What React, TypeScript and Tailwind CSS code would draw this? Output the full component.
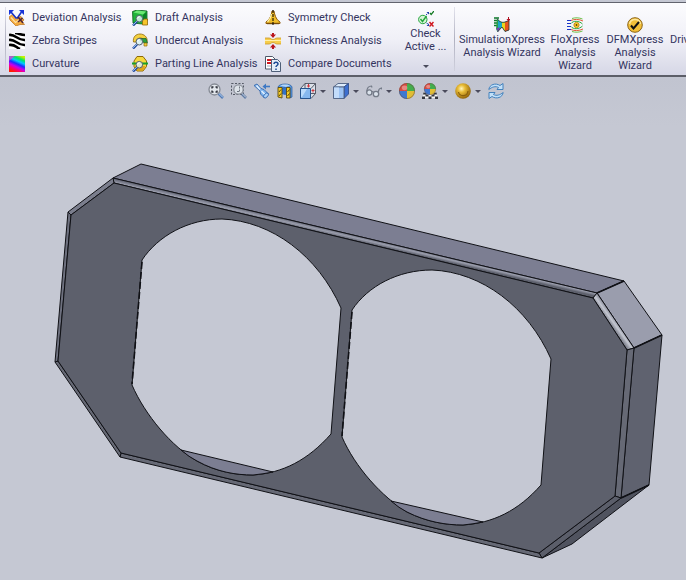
import React from 'react';
import type { ReactNode } from 'react';

function Icon({ children }: { children: ReactNode }) {
    return (
        <svg viewBox="0 0 16 16" className="w-4 h-4 shrink-0" aria-hidden="true">
            {children}
        </svg>
    );
}

function Caret() {
    return (
        <svg viewBox="0 0 6 3" className="w-[6px] h-[3px] shrink-0" aria-hidden="true">
            <path d="M0 0h6L3 3z" fill="#4a4b5c" />
        </svg>
    );
}

// Lupa pequeña que comparten varios iconos de análisis
function Lens() {
    return (
        <g>
            <path d="M5 11.5L1 15.5" stroke="#234a9c" strokeWidth="2.4" />
            <path d="M5 11L1.2 14.8" stroke="#8fc0f5" strokeWidth="1" />
            <circle cx="7.3" cy="8.7" r="3.3" fill="#d9f1ee" fillOpacity="0.85" stroke="#52606e" />
            <path d="M5.6 8.4a2 2 0 0 1 2-1.7" stroke="#fff" fill="none" />
        </g>
    );
}

const DeviationIcon = () => (
    <Icon>
        <path d="M0 7l3.5-2.5L7 8l5-1.5 3 3.5-2 1.5 2.5 3H11L7 16 1 10z" fill="#f3a93c" stroke="#b8701c" strokeWidth="0.7" />
        <path d="M2 7.5l4.5 5 3.5-2.5" stroke="#ffe0a0" strokeWidth="1.3" fill="none" />
        <path d="M2 2l5.5 6.5M12.5 2L8 8.5" stroke="#1733c8" strokeWidth="1.6" />
        <path d="M0 0h5L0 5zM15 0h-5l5 5z" fill="#1733d8" />
        <path d="M9 7l5 6M13.5 8L9 12" stroke="#4d2435" strokeWidth="1.6" />
    </Icon>
);

const ZebraIcon = () => (
    <Icon>
        <path d="M0 0h16v16H0z" fill="#fff" />
        <path d="M0 2c7-1 8 5.500 16 5M6 0c4 0 5 2 10 2M0 7c7-1 8 5.500 16 5M0 12c6-1 7 2.500 11 4" stroke="#000" strokeWidth="2.6" fill="none" />
    </Icon>
);

const CurvatureIcon = () => (
    <Icon>
        <defs>
            <linearGradient id="curvature" x1="0.75" y1="0" x2="0.3" y2="1">
                <stop offset="0" stopColor="#c8f000" />
                <stop offset="0.18" stopColor="#00e860" />
                <stop offset="0.34" stopColor="#00c8ff" />
                <stop offset="0.5" stopColor="#1b2cff" />
                <stop offset="0.66" stopColor="#c400f0" />
                <stop offset="0.82" stopColor="#ff0070" />
                <stop offset="1" stopColor="#ff1a00" />
            </linearGradient>
        </defs>
        <path d="M0 0h16v16H0z" fill="url(#curvature)" />
        <path d="M0 0h6L0 5z" fill="#f030d0" fillOpacity="0.7" />
    </Icon>
);

const DraftIcon = () => (
    <Icon>
        <path d="M.5 1.5L5 0l10 1v10l-5 3-9-1z" fill="#1fb43a" stroke="#0b5c1c" strokeWidth="0.8" />
        <path d="M5 .5l9 1-3 3-9.5-2z" fill="#6be874" />
        <path d="M11 5l3.5-3v9L11 13z" fill="#0e8228" />
        <path d="M10.5 10.5l2-1.5H15.5v6h-5z" fill="#f6c42c" stroke="#8f6a08" strokeWidth="0.8" />
        <Lens />
    </Icon>
);

const UndercutIcon = () => (
    <Icon>
        <path d="M1.5 9C.5 4 4 1 8 1s8 3 7 8h-3c0-3-2-4-4-4S4.5 7 4.5 9z" fill="#f4d040" stroke="#8f6a08" strokeWidth="0.8" />
        <path d="M8 5.5h6l1.5 4.5H12L10.5 8H8z" fill="#2da040" stroke="#155c22" strokeWidth="0.7" />
        <path d="M12 10h3v3h-3z" fill="#f4d040" stroke="#8f6a08" strokeWidth="0.7" />
        <Lens />
    </Icon>
);

const PartingIcon = () => (
    <Icon>
        <path d="M5 .5h6l3.5 4.5v5.5L11 15H5l-3-4.5V5z" fill="#f6d83c" stroke="#8f6a08" />
        <path d="M3 10h10.5L11 14.5H5z" fill="#e0a41c" />
        <path d="M0 7.5h4.5M10 7.5h6" stroke="#18a12c" strokeWidth="2" />
        <Lens />
    </Icon>
);

const SymmetryIcon = () => (
    <Icon>
        <path d="M7 1h2c1 6 3 9 6 11v1.5H1V12c3-2 5-5 6-11z" fill="#f0bd2a" stroke="#8f5a08" />
        <path d="M6.5 4C6 8 4.5 10 2.5 12" stroke="#fff3a8" strokeWidth="1.3" fill="none" />
        <path d="M2 13.5h12" stroke="#7b4d08" strokeWidth="1.4" />
        <path d="M8 0v16" stroke="#000" strokeDasharray="3 1" />
    </Icon>
);

const ThicknessIcon = () => (
    <Icon>
        <path d="M0 5h4c2 0 2 1.5 4 1.5S10 5 12 5h4v6h-4c-2 0-2-1.5-4-1.5S6 11 4 11H0z" fill="#f6cc4a" />
        <path d="M0 5h4c2 0 2 1.5 4 1.5S10 5 12 5h4M0 11h4c2 0 2-1.5 4-1.5S10 11 12 11h4" stroke="#c9972a" strokeWidth="0.8" fill="none" />
        <path d="M0 7.5h16" stroke="#fff0a8" />
        <path d="M7 0h2v1.5h2L8 5 5 1.5h2zM7 16h2v-1.5h2L8 11l-3 3.5h2z" fill="#b8141c" />
    </Icon>
);

const CompareIcon = () => (
    <Icon>
        <path d="M.5.5h7l2.5 2.5v10H.5z" fill="#fff" stroke="#4f5868" />
        <path d="M2 4h6M2 7h5" stroke="#d01820" strokeWidth="2" />
        <path d="M2 10h4" stroke="#9aa5b8" />
        <path d="M6.5 3.5h6l3 3v9h-9z" fill="#e4edf8" stroke="#4f5f78" />
        <path d="M9 8c0-2.500 4-2.500 4 0 0 1.500-2 1.500-2 3M11 12.500V14" stroke="#1c4a94" strokeWidth="1.5" fill="none" />
    </Icon>
);

const CheckActiveIcon = () => (
    <Icon>
        <circle cx="4.8" cy="8.5" r="4.2" fill="#d8f4d8" stroke="#24a53c" />
        <path d="M2.5 8l2 2.5L8.5 5" stroke="#24a53c" strokeWidth="1.4" fill="none" />
        <path d="M8 4l3-2.5M8.5 12l2.5 1.5" stroke="#1c3ca8" strokeDasharray="1.5 1" />
        <path d="M8.5 1H11v2.5zM8.5 15H11v-2.5z" fill="#1c3ca8" />
        <path d="M12 2l1.2 1.5L16 0" stroke="#157a24" strokeWidth="1.3" fill="none" />
        <path d="M11.5 11l4 4.5M15.5 11l-4 4.5" stroke="#d01820" strokeWidth="1.5" />
    </Icon>
);

const SimulationIcon = () => (
    <Icon>
        <path d="M0 1h5M0 3.5h5M0 6h4M0 8.5h4" stroke="#0d7a2a" strokeWidth="1.5" />
        <path d="M3 1.5c2 3 5 4.5 8 3.5l4-1.5V13l-4 1.5L8 10l-4.5 5L2 12z" fill="#2aa04a" />
        <path d="M4 3l4 3v4l-4 2z" fill="#1ba6c8" />
        <path d="M2.5 11L6 10.5l-2 4.500z" fill="#7b38b8" />
        <path d="M8 5.5h3v8.500L8 10z" fill="#e7d51c" />
        <path d="M11 5l4-1.5V13l-4 1.5z" fill="#e8551c" />
        <path d="M3 1.5c2 3 5 4.5 8 3.5l4-1.5V13l-4 1.5L8 10l-4.5 5" stroke="#26323a" strokeWidth="0.8" fill="none" />
        <path d="M14.5 0v3" stroke="#b01020" />
        <path d="M12.5 2h4l-2 2.5z" fill="#b01020" />
    </Icon>
);

const FloIcon = () => (
    <Icon>
        <path d="M0 3.5h4M0 6.5h4M0 9.5h4M0 12.5h4" stroke="#1733c8" />
        <path d="M4 3.5c3-1.5 8-1.5 12 .5M4 12.5c3 1.5 8 1.5 12-.5" stroke="#e05a38" fill="none" />
        <path d="M4 6.5C6 3.5 12 3.5 15.5 7M4 9.5c2 3 8 3 11.5-.5" stroke="#28a838" fill="none" />
        <path d="M5 1.5c3-1 7-1 10.5.5M5 14.5c3 1 7 1 10.5-.5" stroke="#6bc048" fill="none" />
        <circle cx="9.5" cy="8" r="2.6" fill="#f7d02c" stroke="#c88a10" />
        <circle cx="9.5" cy="8" r="0.9" fill="#584010" />
    </Icon>
);

const DfmIcon = () => (
    <Icon>
        <circle cx="8" cy="8" r="7.3" fill="#f3bf38" stroke="#8a6418" />
        <path d="M2.5 7a5.6 5.6 0 0 1 11 0" stroke="#ffe79a" strokeWidth="1.5" fill="none" />
        <path d="M4 8.5l2.5 3L12 5" stroke="#111" strokeWidth="2" fill="none" />
    </Icon>
);

const ZoomFitIcon = () => (
    <Icon>
        <path d="M10.5 10.5l4.5 4.5" stroke="#5079b4" strokeWidth="2.6" />
        <path d="M10.5 10l4.5 4.5" stroke="#bcd6f2" />
        <circle cx="6.5" cy="6.5" r="5.5" fill="#e3e7ec" stroke="#868b95" strokeWidth="1.3" />
        <path d="M4 5.5V4h1.5M7.5 4H9v1.5M9 7.5V9H7.5M5.5 9H4V7.5" stroke="#2c2f38" strokeWidth="1.4" fill="none" />
    </Icon>
);

const ZoomAreaIcon = () => (
    <Icon>
        <path d="M.5.5h12v11H.5z" fill="none" stroke="#555a66" strokeDasharray="2 1.5" />
        <path d="M11 11l4 4" stroke="#5f7ba4" strokeWidth="2.6" />
        <path d="M11 10.5l4 4" stroke="#cbd5e2" />
        <circle cx="7.5" cy="6.5" r="4.7" fill="#dfe4ea" fillOpacity="0.9" stroke="#8d929c" strokeWidth="1.3" />
        <path d="M8.5 3.5v5M6 8.5h3" stroke="#6f7580" strokeDasharray="2 1" />
    </Icon>
);

const PreviousViewIcon = () => (
    <Icon>
        <path d="M0 2.5L3 1l4 4.5 3 1 4.5 4.5-4 4L6.5 11 6 8z" fill="#7db4ee" stroke="#2c5fa8" strokeWidth="0.8" />
        <path d="M2.5 2.5l3.5 4M7.5 8l4 4" stroke="#e3f1ff" strokeWidth="1.5" />
        <ellipse cx="12" cy="12.5" rx="1.8" ry="3" transform="rotate(45 12 12.5)" fill="#a9d2fa" stroke="#2c5fa8" strokeWidth="0.8" />
        <path d="M11 3.5h5" stroke="#3d78c4" strokeWidth="1.6" />
        <path d="M8.5 3.5L12 .5v6z" fill="#3d78c4" />
    </Icon>
);

const SectionIcon = () => (
    <Icon>
        <path d="M5 3h6v8l-3 1-3-1z" fill="#3272c8" />
        <path d="M1 4c1-4 13-4 14 0v10l-2 1V5L9 3.5 6 5 1 4.5z" fill="#5a9ae4" stroke="#285a9c" strokeWidth="0.7" />
        <path d="M3 2.5c2-1.5 8-1.5 10 0L9 4z" fill="#b3d6fa" />
        <path d="M1 4.5h4V15l-4-1zM9.5 4.5H13V15H9.5z" fill="#f4cb28" stroke="#5c4a10" strokeWidth="0.9" />
        <path d="M2 13l2-2.5M2 9l2-2.5M10.5 13l2-2.5M10.5 9l2-2.5" stroke="#4a3c08" strokeWidth="0.9" />
    </Icon>
);

const OrientationIcon = () => (
    <Icon>
        <path d="M.5 5.5L5 .5h10.5v10L11 15.5H.5z" fill="#dbe0e8" stroke="#4a4f5c" strokeWidth="0.9" />
        <path d="M5 .5v5M11 5.5l4.5-5M11 10.5h4.5" stroke="#4a4f5c" strokeWidth="0.9" fill="none" />
        <path d="M.5 5.5h10v10H.5z" fill="#86b8ee" stroke="#27548c" />
        <path d="M1 6h6l-5 8H1z" fill="#bcdcfb" />
        <path d="M8.5 1v3.5M7 3h3M13 6v3.5M11.5 7.5h3" stroke="#d0343a" />
    </Icon>
);

const DisplayStyleIcon = () => (
    <Icon>
        <path d="M.5 4L5 .5h10.5L11 4z" fill="#dcebfb" stroke="#4c5f80" strokeWidth="0.9" />
        <path d="M11 4l4.5-3.5V11L11 15.5z" fill="#3c6fd0" stroke="#324f8c" strokeWidth="0.9" />
        <path d="M.5 4H11v11.5H.5z" fill="#9cc3f4" stroke="#4c5f80" strokeWidth="0.9" />
        <path d="M1 4.5h5V15H1z" fill="#c3dcfa" />
    </Icon>
);

const GlassesIcon = () => (
    <Icon>
        <circle cx="3.3" cy="9.5" r="2.6" fill="#dbe3ec" stroke="#747b88" strokeWidth="1.3" />
        <circle cx="10" cy="11" r="2.7" fill="#dbe3ec" stroke="#747b88" strokeWidth="1.3" />
        <path d="M.8 8.5C1 5 3 3 5.5 3l.5 1.5M6 9c.5-.7 1-.6 1.5.5M12.5 10c-.5-3 .5-4.500 3-5l.3 1.500" stroke="#747b88" strokeWidth="1.2" fill="none" />
    </Icon>
);

function Ball({ cx, cy, r }: { cx: number; cy: number; r: number }) {
    return (
        <g transform={`translate(${cx} ${cy}) scale(${r})`}>
            <path d="M0 0V-1A1 1 0 0 0-1 0z" fill="#d84a40" />
            <path d="M0 0V-1A1 1 0 0 1 1 0z" fill="#43ad4c" />
            <path d="M0 0V1A1 1 0 0 1-1 0z" fill="#3f78d0" />
            <path d="M0 0V1A1 1 0 0 0 1 0z" fill="#e0bd35" />
            <ellipse cx="-0.3" cy="-0.4" rx="0.35" ry="0.3" fill="#fff" fillOpacity="0.35" />
            <circle r="0.95" fill="none" stroke="#6b5048" strokeOpacity="0.6" strokeWidth="0.12" />
        </g>
    );
}

const AppearanceIcon = () => (
    <Icon>
        <Ball cx={8} cy={8} r={8} />
    </Icon>
);

const SceneIcon = () => (
    <Icon>
        <path d="M2 9h12l2 6H0z" fill="#f4f4f4" />
        <path d="M1.5 9.5h3v2H1zM11.5 9.5h3l.5 2h-3.5zM3.5 11.5h3v2h-3zM9.5 11.5h3v2h-3zM0 13.5h3V16H0zM6.5 13.5h3V16h-3zM13 13.5h3V16h-3z" fill="#34363e" />
        <Ball cx={8} cy={6} r={6} />
    </Icon>
);

const RealViewIcon = () => (
    <Icon>
        <defs>
            <radialGradient id="gold" cx="0.4" cy="0.35" r="0.65">
                <stop offset="0" stopColor="#fff6c0" />
                <stop offset="0.35" stopColor="#e9bd38" />
                <stop offset="1" stopColor="#93650a" />
            </radialGradient>
        </defs>
        <circle cx="8" cy="8" r="7.8" fill="url(#gold)" />
        <path d="M3.5 9c1 5 9 5 9.5-1" stroke="#8a600c" fill="none" strokeWidth="1.2" />
    </Icon>
);

const RefreshIcon = () => (
    <Icon>
        <path d="M.8 6.5C1.5 1.5 7.5-.5 12 2.5L15 .5v6H9l1.5-2C7.5 2.8 4 4 .8 6.500z" fill="#c2e0f8" stroke="#3578b8" strokeWidth="0.9" strokeLinejoin="round" />
        <path d="M15.2 9.5C14.5 14.5 8.5 16.5 4 13.5L1 15.5v-6h6l-1.5 2c3 1.7 6.5.5 9.7-2z" fill="#c2e0f8" stroke="#3578b8" strokeWidth="0.9" strokeLinejoin="round" />
    </Icon>
);

const analysisColumns = [
    {
        width: 'w-[123px]',
        tools: [
            { label: 'Deviation Analysis', icon: <DeviationIcon /> },
            { label: 'Zebra Stripes', icon: <ZebraIcon /> },
            { label: 'Curvature', icon: <CurvatureIcon /> },
        ],
    },
    {
        width: 'w-[133px]',
        tools: [
            { label: 'Draft Analysis', icon: <DraftIcon /> },
            { label: 'Undercut Analysis', icon: <UndercutIcon /> },
            { label: 'Parting Line Analysis', icon: <PartingIcon /> },
        ],
    },
    {
        width: 'w-[132px]',
        tools: [
            { label: 'Symmetry Check', icon: <SymmetryIcon /> },
            { label: 'Thickness Analysis', icon: <ThicknessIcon /> },
            { label: 'Compare Documents', icon: <CompareIcon /> },
        ],
    },
];

const wizards = [
    { lines: ['SimulationXpress', 'Analysis Wizard'], width: 'w-[88px]', icon: <SimulationIcon /> },
    { lines: ['FloXpress', 'Analysis', 'Wizard'], width: 'w-[58px]', icon: <FloIcon /> },
    { lines: ['DFMXpress', 'Analysis', 'Wizard'], width: 'w-[62px]', icon: <DfmIcon /> },
];

const viewTools = [
    { label: 'Zoom to Fit', icon: <ZoomFitIcon />, menu: false },
    { label: 'Zoom to Area', icon: <ZoomAreaIcon />, menu: false },
    { label: 'Previous View', icon: <PreviousViewIcon />, menu: false },
    { label: 'Section View', icon: <SectionIcon />, menu: false },
    { label: 'View Orientation', icon: <OrientationIcon />, menu: true },
    { label: 'Display Style', icon: <DisplayStyleIcon />, menu: true },
    { label: 'Hide/Show Items', icon: <GlassesIcon />, menu: true },
    { label: 'Edit Appearance', icon: <AppearanceIcon />, menu: false },
    { label: 'Apply Scene', icon: <SceneIcon />, menu: true },
    { label: 'View Settings', icon: <RealViewIcon />, menu: true },
    { label: 'Rebuild', icon: <RefreshIcon />, menu: false },
];

function Separator() {
    return <div className="w-px my-1 shrink-0 bg-linear-to-b from-[#e4e4ee] via-[#b0b1c0] to-[#d0d1de]" />;
}

function Ribbon() {
    return (
        <header className="flex h-[75px] overflow-hidden border-t border-b-2 border-t-[#62646e] border-b-[#5c5e68] bg-linear-to-b from-[#fcfcfe] via-[#f0f0f7] to-[#d6d7e6] pl-[5px]">
            <Separator />
            <div className="flex shrink-0 pl-[3px] pt-[3px]">
                {analysisColumns.map((column) => (
                    <div key={column.tools[0].label} className={`flex flex-col shrink-0 ${column.width}`}>
                        {column.tools.map((tool) => (
                            <button key={tool.label} className="flex items-center gap-[7px] h-[23px] whitespace-nowrap">
                                {tool.icon}
                                {tool.label}
                            </button>
                        ))}
                    </div>
                ))}
            </div>
            <button className="flex flex-col items-center shrink-0 w-[57px] pt-2 whitespace-nowrap">
                <CheckActiveIcon />
                <span>Check</span>
                <span className="mb-3">Active ...</span>
                <Caret />
            </button>
            <Separator />
            <div className="flex shrink-0 pl-[3px]">
                {wizards.map((wizard) => (
                    <button key={wizard.lines[0]} className={`flex flex-col items-center justify-start shrink-0 pt-[14px] whitespace-nowrap ${wizard.width}`}>
                        {wizard.icon}
                        {wizard.lines.map((line) => (
                            <span key={line}>{line}</span>
                        ))}
                    </button>
                ))}
                <button className="flex flex-col items-start shrink-0 pl-1 pt-[30px]">Driv</button>
            </div>
        </header>
    );
}

function ViewToolbar() {
    return (
        <nav className="flex justify-center gap-[7px] pl-[25px] pt-[6px]">
            {viewTools.map((tool) => (
                <button key={tool.label} aria-label={tool.label} className="flex items-center gap-1">
                    {tool.icon}
                    {tool.menu && <Caret />}
                </button>
            ))}
        </nav>
    );
}

// Contornos de las dos aberturas de la placa
const leftHole =
    'M142 260C158 236 188 219 222 219C272 221 318 256 341 308L331 434C308 460 283 473 253 475C236 475 217 472 197 461C172 447 145 415 132 385Z';
const rightHole =
    'M352 310C368 286 398 270 432 270C482 272 528 307 551 359L541 485C518 511 493 523 463 525C446 525 427 522 407 512C382 497 355 467 342 437Z';

function PlateModel() {
    return (
        <svg viewBox="0 99 686 481" className="block w-full" role="img" aria-label="Plate">
            <defs>
                <linearGradient id="bevel" gradientUnits="userSpaceOnUse" x1="350" y1="234" x2="348.8" y2="239.2">
                    <stop offset="0" stopColor="#6c6f7e" />
                    <stop offset="0.5" stopColor="#9a9dac" />
                    <stop offset="1" stopColor="#5d606c" />
                </linearGradient>
                <linearGradient id="cornerBevel" gradientUnits="userSpaceOnUse" x1="609" y1="325" x2="616" y2="320">
                    <stop offset="0" stopColor="#656875" />
                    <stop offset="0.6" stopColor="#c4c7d1" />
                    <stop offset="1" stopColor="#8b8e9c" />
                </linearGradient>
            </defs>
            <g stroke="#101116" strokeWidth="1" strokeLinejoin="round">
                <path d="M141 164L624 281L597 293L113 178Z" fill="#7c7e92" />
                <path d="M113 178L597 293L593 298L114 183Z" fill="url(#bevel)" />
                <path d="M624 281L662 335L634 348L597 293Z" fill="#9a9dad" />
                <path d="M597 293L634 348L627 350L593 298Z" fill="url(#cornerBevel)" />
                <path d="M662 335L649 485L621 498L634 348Z" fill="#5f626f" />
                <path d="M634 348L621 498L615 496L627 350Z" fill="#666975" />
                <path d="M649 485L572 544L542 558L621 498Z" fill="#50535f" />
                <path d="M621 498L542 558L539 553L615 496Z" fill="#5b5e6a" />
                <path d="M542 558L120 457L121 453L539 553Z" fill="#666975" />
                <path d="M120 457L55 362L58 361L121 453Z" fill="#666975" />
                <path d="M55 362L68 212L71 215L58 361Z" fill="#6d707e" />
                <path d="M68 212L113 178L114 183L71 215Z" fill="#7b7e8d" />
                <path d="M114 183L593 298L627 350L615 496L539 553L121 453L58 361L71 215Z" fill="#5d606c" />
                <path d={leftHole} fill="#c5c8d3" />
                <path d={rightHole} fill="#c5c8d3" />
                <path d="M181 450L273 472Q263 474 253 475C236 475 217 472 197 461Q189 457 181 450Z" fill="#7c7e92" />
                <path d="M391 501L483 522Q473 524 463 525C446 525 427 522 407 512Q399 508 391 501Z" fill="#7c7e92" />
            </g>
            <path d="M624 281L597 293M662 335L634 348M649 485L621 498" stroke="#101116" strokeWidth="1.5" />
            <path d="M142 262L132 384M352 312L342 436" stroke="#101116" strokeWidth="1.6" strokeDasharray="7 3" />
        </svg>
    );
}

export default function App() {
    return (
        <div className="min-h-screen overflow-hidden bg-[#c5c8d3] pt-[2px] font-[Roboto,'DejaVu_Sans',sans-serif] text-[11px] leading-[13px] text-[#34355f]">
            <Ribbon />
            <main className="bg-linear-to-b from-[#c1c4d0] to-[#c5c8d3] to-10%">
                <ViewToolbar />
                <PlateModel />
            </main>
        </div>
    );
}
